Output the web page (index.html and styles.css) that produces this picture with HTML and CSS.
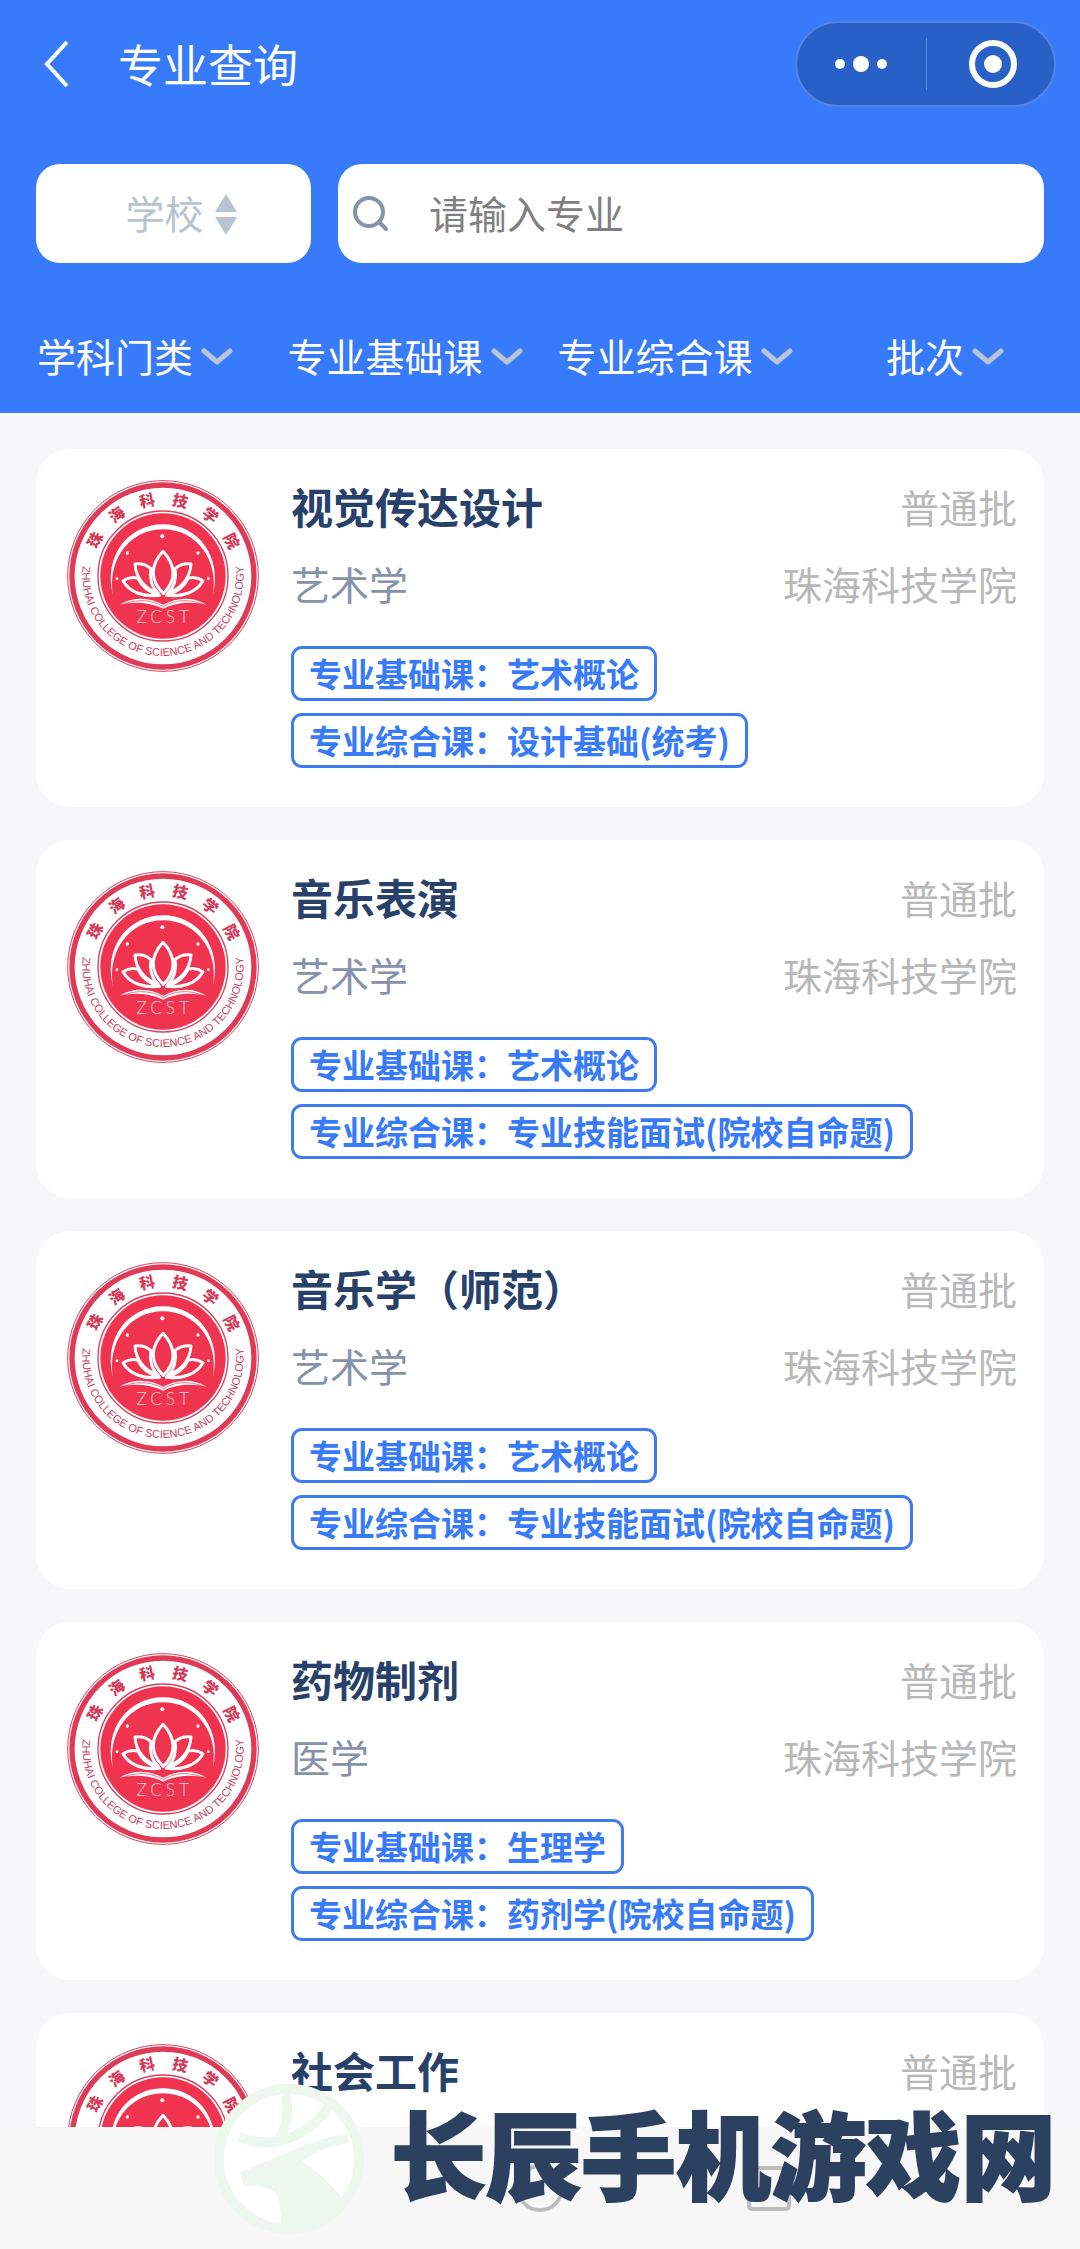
FILE: index.html
```html
<!DOCTYPE html>
<html lang="zh-CN">
<head>
    <meta charset="UTF-8">
    <meta name="viewport" content="width=device-width, initial-scale=1.0">
    <title>专业查询</title>
    <link rel="stylesheet" href="styles.css">
</head>
<body>
    <!-- Shared icons -->
    <svg class="sprite" aria-hidden="true">
        <symbol id="chevron" viewBox="0 0 32 20">
            <path d="M3 4 L16 15 L29 4" fill="none" stroke="#b9c4d4" stroke-width="5" stroke-linecap="round" stroke-linejoin="round"/>
        </symbol>
        <symbol id="school-logo" viewBox="52 60 576 576">
            <g fill="none" stroke="#d9405c">
                <circle cx="340" cy="348" r="286" stroke-width="3"/>
                <circle cx="340" cy="348" r="273" stroke-width="16" stroke="#e03a56"/>
                <circle cx="340" cy="348" r="195" stroke-width="4"/>
            </g>
            <circle cx="340" cy="348" r="188" fill="#f0344f"/>
            <g class="logo-cn">
                <text transform="rotate(-62 340 348)" x="340" y="134">珠</text>
                <text transform="rotate(-37 340 348)" x="340" y="134">海</text>
                <text transform="rotate(-12 340 348)" x="340" y="134">科</text>
                <text transform="rotate(13 340 348)" x="340" y="134">技</text>
                <text transform="rotate(38 340 348)" x="340" y="134">学</text>
                <text transform="rotate(63 340 348)" x="340" y="134">院</text>
            </g>
            <path id="logo-arc" d="M101 308 A242 242 0 1 0 579 308" fill="none"/>
            <text class="logo-en"><textPath href="#logo-arc" startOffset="50%">ZHUHAI COLLEGE OF SCIENCE AND TECHNOLOGY</textPath></text>
            <g fill="#fff">
                <path d="M190 405 C160 290 235 193 340 193 C445 193 518 290 490 405 C508 300 440 208 340 208 C240 208 172 300 190 405Z"/>
                <circle cx="338" cy="229" r="6"/>
                <circle cx="233" cy="279" r="5"/>
                <circle cx="445" cy="279" r="5"/>
                <circle cx="202" cy="356" r="4"/>
                <circle cx="476" cy="356" r="4"/>
                <path d="M210 434 C250 408 302 412 341 434 C380 412 430 408 470 434 C430 424 380 426 341 446 C300 426 250 424 210 434Z"/>
            </g>
            <g fill="none" stroke="#fff" stroke-width="9" stroke-linejoin="round">
                <path d="M340 274 C302 315 300 360 341 400 C382 360 378 315 340 274Z"/>
                <path d="M304 326 C290 314 272 310 256 312 C258 350 282 385 326 400 C306 382 298 352 304 326Z"/>
                <path d="M264 354 C248 350 232 354 220 362 C240 398 285 412 330 406 C300 398 275 378 264 354Z"/>
                <path d="M376 326 C390 314 408 310 424 312 C422 350 398 385 354 400 C374 382 382 352 376 326Z"/>
                <path d="M416 354 C432 350 448 354 460 362 C440 398 395 412 350 406 C380 398 405 378 416 354Z"/>
            </g>
            <path d="M225 431 C268 416 308 420 341 440 C374 420 412 416 455 431" fill="none" stroke="#f0344f" stroke-width="2"/>
            <text class="logo-zcst" x="276 319 362 403" y="490">ZCST</text>
        </symbol>
    </svg>

    <header class="header">
        <div class="topbar">
            <button class="back" aria-label="返回">
                <svg width="30" height="50" viewBox="0 0 30 50"><path d="M26 3 L6 25 L26 47" fill="none" stroke="#fff" stroke-width="4"/></svg>
            </button>
            <h1>专业查询</h1>
            <div class="capsule">
                <button aria-label="更多">
                    <svg width="52" height="20" viewBox="0 0 52 20" fill="#fff"><circle cx="5" cy="10" r="5"/><circle cx="26" cy="10" r="8"/><circle cx="47" cy="10" r="5"/></svg>
                </button>
                <button aria-label="关闭">
                    <svg width="48" height="48" viewBox="0 0 48 48"><circle cx="24" cy="24" r="21" fill="none" stroke="#fff" stroke-width="6"/><circle cx="24" cy="24" r="9" fill="#fff"/></svg>
                </button>
            </div>
        </div>

        <div class="search-row">
            <label class="school">
                <select aria-label="学校"><option>学校</option></select>
                <svg width="22" height="42" viewBox="0 0 22 42" fill="#b8c3d0"><path d="M11 1 L22 19 H0Z M0 24 H22 L11 42Z"/></svg>
            </label>
            <label class="search">
                <svg width="36" height="36" viewBox="0 0 36 36" fill="none" stroke="#8592ab" stroke-width="4" stroke-linecap="round"><circle cx="16" cy="16" r="14"/><path d="M26 26 L33 33"/></svg>
                <input type="text" placeholder="请输入专业" aria-label="专业">
            </label>
        </div>

        <div class="filters">
            <label class="filter">
                <select aria-label="学科门类"><option>学科门类</option></select>
                <svg width="32" height="20"><use href="#chevron"/></svg>
            </label>
            <label class="filter">
                <select aria-label="专业基础课"><option>专业基础课</option></select>
                <svg width="32" height="20"><use href="#chevron"/></svg>
            </label>
            <label class="filter">
                <select aria-label="专业综合课"><option>专业综合课</option></select>
                <svg width="32" height="20"><use href="#chevron"/></svg>
            </label>
            <label class="filter">
                <select aria-label="批次"><option>批次</option></select>
                <svg width="32" height="20"><use href="#chevron"/></svg>
            </label>
        </div>
    </header>

    <main class="list">
        <article class="card">
            <svg class="logo"><use href="#school-logo"/></svg>
            <div class="info">
                <div class="row"><h2>视觉传达设计</h2><span class="muted">普通批</span></div>
                <div class="row"><span class="subject">艺术学</span><span class="muted">珠海科技学院</span></div>
                <div class="tags">
                    <span class="tag">专业基础课：艺术概论</span>
                    <span class="tag">专业综合课：设计基础(统考)</span>
                </div>
            </div>
        </article>

        <article class="card">
            <svg class="logo"><use href="#school-logo"/></svg>
            <div class="info">
                <div class="row"><h2>音乐表演</h2><span class="muted">普通批</span></div>
                <div class="row"><span class="subject">艺术学</span><span class="muted">珠海科技学院</span></div>
                <div class="tags">
                    <span class="tag">专业基础课：艺术概论</span>
                    <span class="tag">专业综合课：专业技能面试(院校自命题)</span>
                </div>
            </div>
        </article>

        <article class="card">
            <svg class="logo"><use href="#school-logo"/></svg>
            <div class="info">
                <div class="row"><h2>音乐学（师范）</h2><span class="muted">普通批</span></div>
                <div class="row"><span class="subject">艺术学</span><span class="muted">珠海科技学院</span></div>
                <div class="tags">
                    <span class="tag">专业基础课：艺术概论</span>
                    <span class="tag">专业综合课：专业技能面试(院校自命题)</span>
                </div>
            </div>
        </article>

        <article class="card">
            <svg class="logo"><use href="#school-logo"/></svg>
            <div class="info">
                <div class="row"><h2>药物制剂</h2><span class="muted">普通批</span></div>
                <div class="row"><span class="subject">医学</span><span class="muted">珠海科技学院</span></div>
                <div class="tags">
                    <span class="tag">专业基础课：生理学</span>
                    <span class="tag">专业综合课：药剂学(院校自命题)</span>
                </div>
            </div>
        </article>

        <article class="card">
            <svg class="logo"><use href="#school-logo"/></svg>
            <div class="info">
                <div class="row"><h2>社会工作</h2><span class="muted">普通批</span></div>
            </div>
        </article>
    </main>

    <nav class="navbar">
        <button aria-label="主屏幕">
            <svg width="50" height="50" viewBox="0 0 50 50"><circle cx="25" cy="25" r="22" fill="none" stroke="#bdbdbd" stroke-width="4"/></svg>
        </button>
        <button aria-label="最近任务">
            <svg width="50" height="50" viewBox="0 0 50 50"><rect x="5" y="5" width="40" height="41" rx="3" fill="none" stroke="#bdbdbd" stroke-width="4"/></svg>
        </button>
    </nav>

    <div class="watermark">
        <svg width="150" height="150" viewBox="0 0 150 150">
            <circle cx="75" cy="75" r="70" fill="#fff" stroke="#edf7ee" stroke-width="10"/>
            <path d="M72 10 C75 30 72 42 66 55 M25 53 C62 68 96 50 117 20" fill="none" stroke="#edf7ee" stroke-width="10"/>
            <path d="M133 50 C95 55 60 76 26 88 L30 102 C42 101 53 103 62 108 C66 118 67 129 67 141 L80 147 C105 142 122 128 129 115 C118 101 105 89 88 77 C102 67 118 61 135 59Z" fill="#edf7ee"/>
        </svg>
        <span>长辰手机游戏网</span>
    </div>
</body>
</html>
```
FILE: styles.css
```css
* {
    box-sizing: border-box;
}
body {
    display: flex;
    flex-direction: column;
    height: 100vh;
    margin: 0;
    overflow: hidden;
    background-color: #f5f7f9;
    font-family: "Noto Sans CJK SC", sans-serif;
    font-size: 39px;
    line-height: 52px;
}
h1, h2 {
    margin: 0;
}
svg {
    display: block;
    flex: none;
}
button {
    display: flex;
    align-items: center;
    justify-content: center;
    padding: 0;
    border: none;
    background: none;
    cursor: pointer;
}
select, input {
    padding: 0 0 4px;
    border: none;
    outline: none;
    background: none;
    font: inherit;
    line-height: 56px;
    appearance: none;
}
.sprite {
    position: absolute;
    width: 0;
    height: 0;
}

/* Header */
.header {
    flex: none;
    padding-bottom: 26px;
    background-color: #377bfa;
    color: #fff;
}
.topbar {
    display: flex;
    align-items: center;
    height: 128px;
    padding: 0 24px 0 41px;
}
.topbar h1 {
    margin-left: 47px;
    font-size: 45px;
    font-weight: 400;
}
.capsule {
    display: flex;
    align-items: center;
    width: 261px;
    height: 86px;
    margin-left: auto;
    border: 2px solid #5585e2;
    border-radius: 43px;
    background-color: #2960c8;
}
.capsule button {
    width: 50%;
    height: 52px;
}
.capsule button + button {
    padding-left: 6px;
    border-left: 1px solid #5b86d8;
}
.search-row {
    display: flex;
    gap: 27px;
    margin: 36px 36px 64px;
}
.school, .search {
    display: flex;
    align-items: center;
    height: 99px;
    border-radius: 24px;
    background-color: #fff;
}
.school {
    justify-content: center;
    gap: 10px;
    width: 275px;
    padding-left: 15px;
}
.school select {
    color: #b8c3d0;
}
.search {
    flex: 1;
    gap: 40px;
    padding: 0 15px;
}
.search input {
    flex: 1;
    min-width: 0;
    color: #333;
}
.search input::placeholder {
    color: #808080;
}
.filters {
    display: grid;
    grid-template-columns: repeat(4, 1fr);
}
.filter {
    display: flex;
    align-items: center;
    justify-content: center;
    gap: 7px;
}
.filter select {
    color: #fff;
}

/* Result cards */
.list {
    display: flex;
    flex: 1;
    flex-direction: column;
    gap: 33px;
    min-height: 0;
    padding: 36px 36px 0;
    overflow: hidden;
}
.card {
    display: flex;
    flex: none;
    gap: 32px;
    padding: 31px 27px 39px 31px;
    border-radius: 34px;
    background-color: #fff;
}
.logo {
    width: 192px;
    height: 192px;
}
.logo-cn {
    fill: #d63a58;
    font-size: 46px;
    font-weight: 900;
    text-anchor: middle;
}
.logo-en {
    fill: #c9405c;
    font-family: "Liberation Sans Narrow", "Liberation Sans", sans-serif;
    font-size: 33px;
    text-anchor: middle;
}
.logo-zcst {
    fill: #fbd0d8;
    font-family: Lato, sans-serif;
    font-size: 52px;
    font-weight: 300;
    text-anchor: middle;
}
.info {
    flex: 1;
}
.row {
    display: flex;
    justify-content: space-between;
    margin-bottom: 25px;
}
.row h2 {
    color: #28416b;
    font-size: 42px;
    font-weight: 700;
}
.muted {
    color: #b8b8b8;
}
.subject {
    color: #8592ab;
}
.tags {
    display: flex;
    flex-direction: column;
    align-items: flex-start;
    gap: 12px;
    margin-top: 37px;
}
.tag {
    padding: 0 15px;
    border: 3px solid #3d7bee;
    border-radius: 11px;
    color: #377bfa;
    font-size: 33px;
    font-weight: 700;
    line-height: 49px;
}

/* System navigation */
.navbar {
    display: flex;
    flex: none;
    justify-content: flex-end;
    gap: 179px;
    height: 122px;
    padding-right: 286px;
    background-color: #f7f7f7;
}

/* Site mark over the bottom of the page */
.watermark {
    position: fixed;
    right: 24px;
    bottom: 15px;
    display: flex;
    align-items: flex-start;
    gap: 27px;
}
.watermark span {
    color: #2c405f;
    font-size: 95px;
    font-weight: 900;
    line-height: 136px;
    -webkit-text-stroke: 2px #2c405f;
    paint-order: stroke fill;
}
```
